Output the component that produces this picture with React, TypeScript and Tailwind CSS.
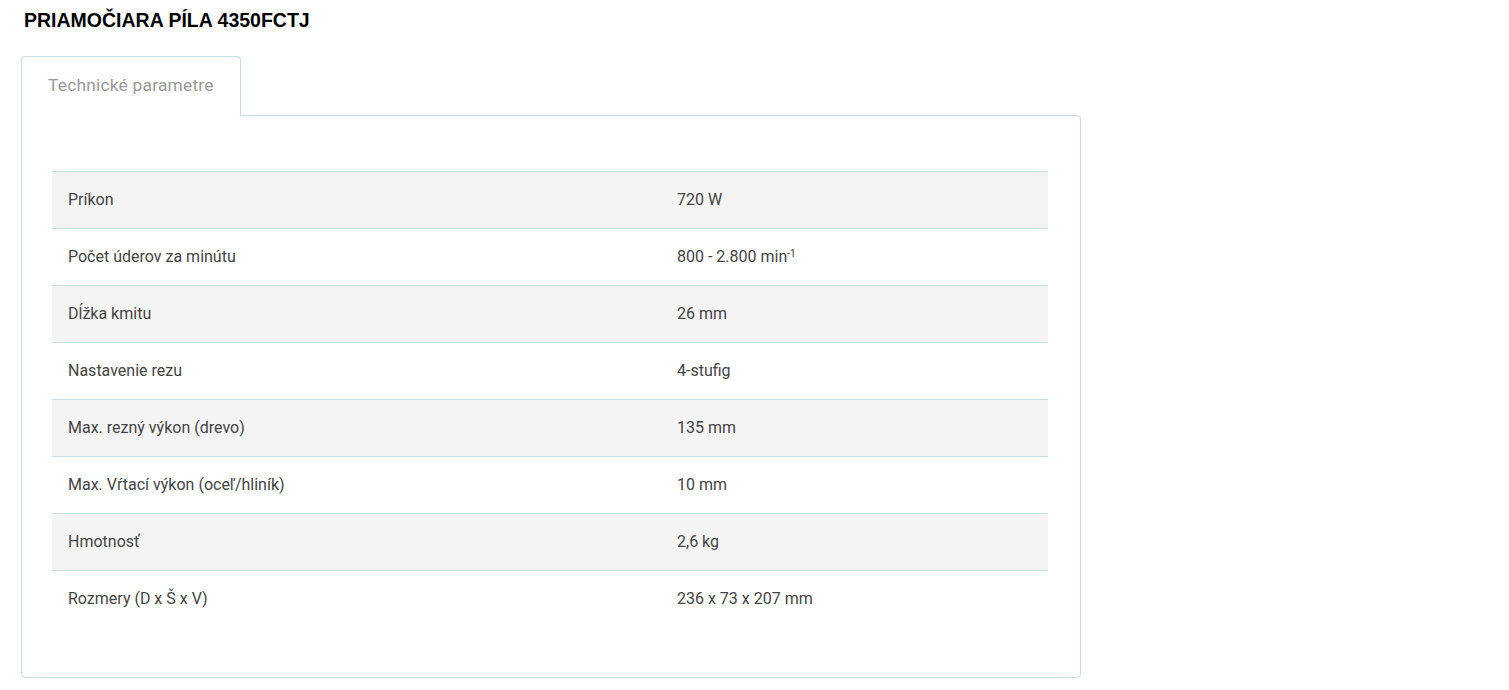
import React from 'react';

const rows: [string, React.ReactNode][] = [
  ['Príkon', '720 W'],
  ['Počet úderov za minútu', <>800 - 2.800 min<sup className="text-[10px]">-1</sup></>],
  ['Dĺžka kmitu', '26 mm'],
  ['Nastavenie rezu', '4-stufig'],
  ['Max. rezný výkon (drevo)', '135 mm'],
  ['Max. Vŕtací výkon (oceľ/hliník)', '10 mm'],
  ['Hmotnosť', '2,6 kg'],
  ['Rozmery (D x Š x V)', '236 x 73 x 207 mm'],
];

const App: React.FC = () => {
  return (
    <div className="w-[1509px] h-[690px] bg-white pl-[21px] pt-[10px] font-['Roboto',sans-serif]">
      <h1 className="pl-[3px] text-[19.5px] leading-[20px] font-bold text-black font-['Liberation_Sans',Arial,sans-serif]">
        PRIAMOČIARA PÍLA 4350FCTJ
      </h1>

      <div className="mt-[26px] w-[1060px]">
        {/* Tab */}
        <div className="flex">
          <div className="relative z-10 -mb-px w-[220px] h-[60px] border border-b-0 border-[#c6dde4] rounded-t-[4px] bg-white pl-[26px] pt-[15px]">
            <span className="text-[17.4px] text-[#999999] tracking-[0.2px]">Technické parametre</span>
          </div>
        </div>

        {/* Panel */}
        <div className="border border-[#c6dde4] rounded-b-[4px] rounded-tr-[4px] pl-[30px] pr-[32px] pt-[55px] pb-[50px]">
          <div className="flex flex-col">
            {rows.map(([label, value], i) => (
              <div
                key={label}
                className={`flex h-[57px] items-center border-t border-[#c6dde4] text-[16px] text-[#444444] ${i % 2 === 0 ? 'bg-[#f4f4f4]' : 'bg-white'}`}
              >
                <div className="w-[609px] pl-[16px]">{label}</div>
                <div className="flex-1 pl-[16px]">{value}</div>
              </div>
            ))}
          </div>
        </div>
      </div>
    </div>
  );
};

export default App;
